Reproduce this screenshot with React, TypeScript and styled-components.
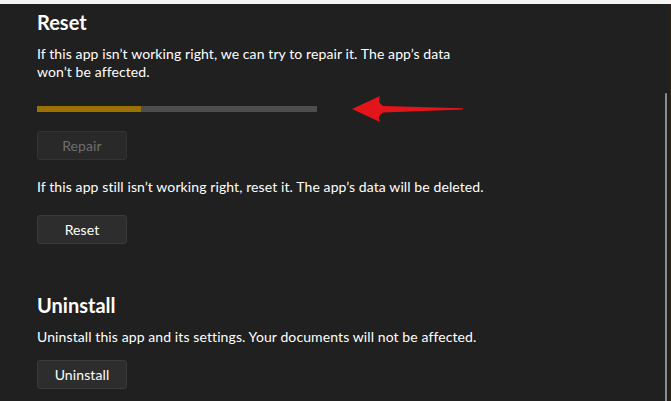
import styled, { createGlobalStyle } from 'styled-components'

const GlobalStyle = createGlobalStyle`
  html, body {
    margin: 0;
    padding: 0;
    background: #202020;
  }
  body {
    font-family: 'Segoe UI', Lato, 'Noto Sans', sans-serif;
    color: #ffffff;
    overflow: hidden;
  }
`

const Window = styled.div`
  width: 671px;
  height: 401px;
  display: flex;
  flex-direction: column;
  background: #202020;
`

const TopStrip = styled.div`
  height: 4px;
  background: #f4f4f4;
`

const Body = styled.div`
  flex: 1;
  display: flex;
  border-right: 1px solid #2e2412;
  min-height: 0;
`

const Content = styled.div`
  flex: 1;
  padding-left: 37px;
  display: flex;
  flex-direction: column;
`

const Rail = styled.div`
  width: 5px;
  display: flex;
  flex-direction: column;
  padding-top: 89px;
`

const Thumb = styled.div`
  flex: 1;
  width: 2px;
  background: #8c8c8c;
  border-radius: 1px 1px 0 0;
`

const Title = styled.h2<{ $top: number }>`
  margin: ${(p) => p.$top}px 0 0;
  font-size: 20px;
  line-height: 28px;
  font-weight: 700;
  color: #ffffff;
`

const Text = styled.p<{ $top: number }>`
  margin: ${(p) => p.$top}px 0 0;
  font-size: 14px;
  line-height: 18px;
  letter-spacing: 0.1px;
  color: #ffffff;
  white-space: nowrap;
`

const ProgressRow = styled.div`
  margin-top: 13px;
  display: flex;
  align-items: center;
  gap: 31px;
  height: 30px;
`

const Track = styled.div`
  width: 280px;
  height: 6px;
  background: #4d4d4d;
  display: flex;
`

const Fill = styled.div`
  background: #9a7102;
  height: 100%;
`

const Button = styled.button<{ $top: number }>`
  margin-top: ${(p) => p.$top}px;
  width: 90px;
  height: 29px;
  box-sizing: border-box;
  border-radius: 3px;
  border: 1px solid #3a3a3a;
  background: #2d2d2d;
  color: #ffffff;
  font-family: inherit;
  font-size: 14px;
  letter-spacing: 0.1px;
  padding: 0;
  &:disabled {
    background: #292929;
    border-color: #333333;
    color: #6f6f6f;
  }
`

function Arrow() {
  return (
    <svg width="118" height="30" viewBox="0 0 118 30">
      <path
        d="M4 15 L32 2 Q29 8 35 12 L115 14.2 L115 15.6 L35 18.5 Q29 22 32 28 Z"
        fill="#e3151a"
      />
    </svg>
  )
}

export default function App() {
  const progress = 37
  return (
    <Window>
      <GlobalStyle />
      <TopStrip />
      <Body>
        <Content>
          <Title $top={4}>Reset</Title>
          <Text $top={9}>
            If this app isn’t working right, we can try to repair it. The app’s data
            <br />
            won’t be affected.
          </Text>
          <ProgressRow>
            <Track>
              <Fill style={{ width: `${progress}%` }} />
            </Track>
            <Arrow />
          </ProgressRow>
          <Button $top={7} disabled>
            Repair
          </Button>
          <Text $top={18}>
            If this app still isn’t working right, reset it. The app’s data will be deleted.
          </Text>
          <Button $top={19}>Reset</Button>
          <Title $top={47}>Uninstall</Title>
          <Text $top={9}>
            Uninstall this app and its settings. Your documents will not be affected.
          </Text>
          <Button $top={14}>Uninstall</Button>
        </Content>
        <Rail>
          <Thumb />
        </Rail>
      </Body>
    </Window>
  )
}
